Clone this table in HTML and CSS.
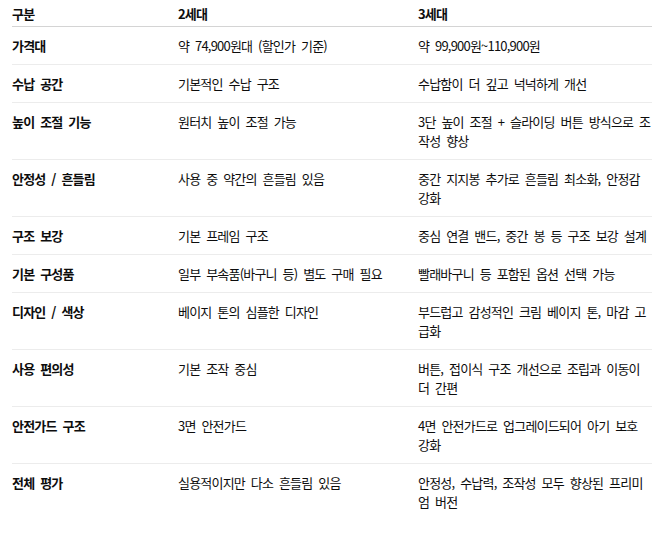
FILE: index.html
```html
<!DOCTYPE html>
<html lang="ko">
<head>
<meta charset="utf-8">
<link rel="stylesheet" href="styles.css">
</head>
<body>
<table class="cmp">
  <thead>
    <tr><th>구분</th><th>2세대</th><th>3세대</th></tr>
  </thead>
  <tbody>
    <tr><td class="k">가격대</td><td>약 74,900원대 (할인가 기준)</td><td>약 99,900원~110,900원</td></tr>
    <tr><td class="k">수납 공간</td><td>기본적인 수납 구조</td><td>수납함이 더 깊고 넉넉하게 개선</td></tr>
    <tr><td class="k">높이 조절 기능</td><td>원터치 높이 조절 가능</td><td>3단 높이 조절 + 슬라이딩 버튼 방식으로 조작성 향상</td></tr>
    <tr><td class="k">안정성 / 흔들림</td><td>사용 중 약간의 흔들림 있음</td><td>중간 지지봉 추가로 흔들림 최소화, 안정감 강화</td></tr>
    <tr><td class="k">구조 보강</td><td>기본 프레임 구조</td><td>중심 연결 밴드, 중간 봉 등 구조 보강 설계</td></tr>
    <tr><td class="k">기본 구성품</td><td>일부 부속품(바구니 등) 별도 구매 필요</td><td>빨래바구니 등 포함된 옵션 선택 가능</td></tr>
    <tr><td class="k">디자인 / 색상</td><td>베이지 톤의 심플한 디자인</td><td>부드럽고 감성적인 크림 베이지 톤, 마감 고급화</td></tr>
    <tr><td class="k">사용 편의성</td><td>기본 조작 중심</td><td>버튼, 접이식 구조 개선으로 조립과 이동이 더 간편</td></tr>
    <tr><td class="k">안전가드 구조</td><td>3면 안전가드</td><td>4면 안전가드로 업그레이드되어 아기 보호 강화</td></tr>
    <tr class="last"><td class="k">전체 평가</td><td>실용적이지만 다소 흔들림 있음</td><td>안정성, 수납력, 조작성 모두 향상된 프리미엄 버전</td></tr>
  </tbody>
</table>
</body>
</html>
```

FILE: styles.css
```css
html, body {
  margin: 0;
  padding: 0;
  background: #ffffff;
}
body {
  font-family: "Noto Sans CJK KR", "Noto Sans", sans-serif;
  font-size: 13px;
  letter-spacing: -0.8px;
  word-spacing: 3px;
  line-height: 19px;
  color: #0d0d0d;
}
.cmp {
  margin-left: 12px;
  width: 640px;
  border-collapse: collapse;
  table-layout: fixed;
}
.cmp th:nth-child(1) { width: 166px; }
.cmp th:nth-child(2) { width: 240px; }
.cmp th:nth-child(3) { width: 234px; }
.cmp th {
  text-align: left;
  font-weight: 700;
  padding: 4px 0 3px 0;
  border-bottom: 1px solid #d4d4d4;
  vertical-align: top;
}
.cmp td {
  padding: 9px 0 9px 0;
  border-bottom: 1px solid #ececec;
  vertical-align: top;
}
.cmp td.k {
  font-weight: 700;
}
.cmp tr.last td {
  border-bottom: none;
}
```
